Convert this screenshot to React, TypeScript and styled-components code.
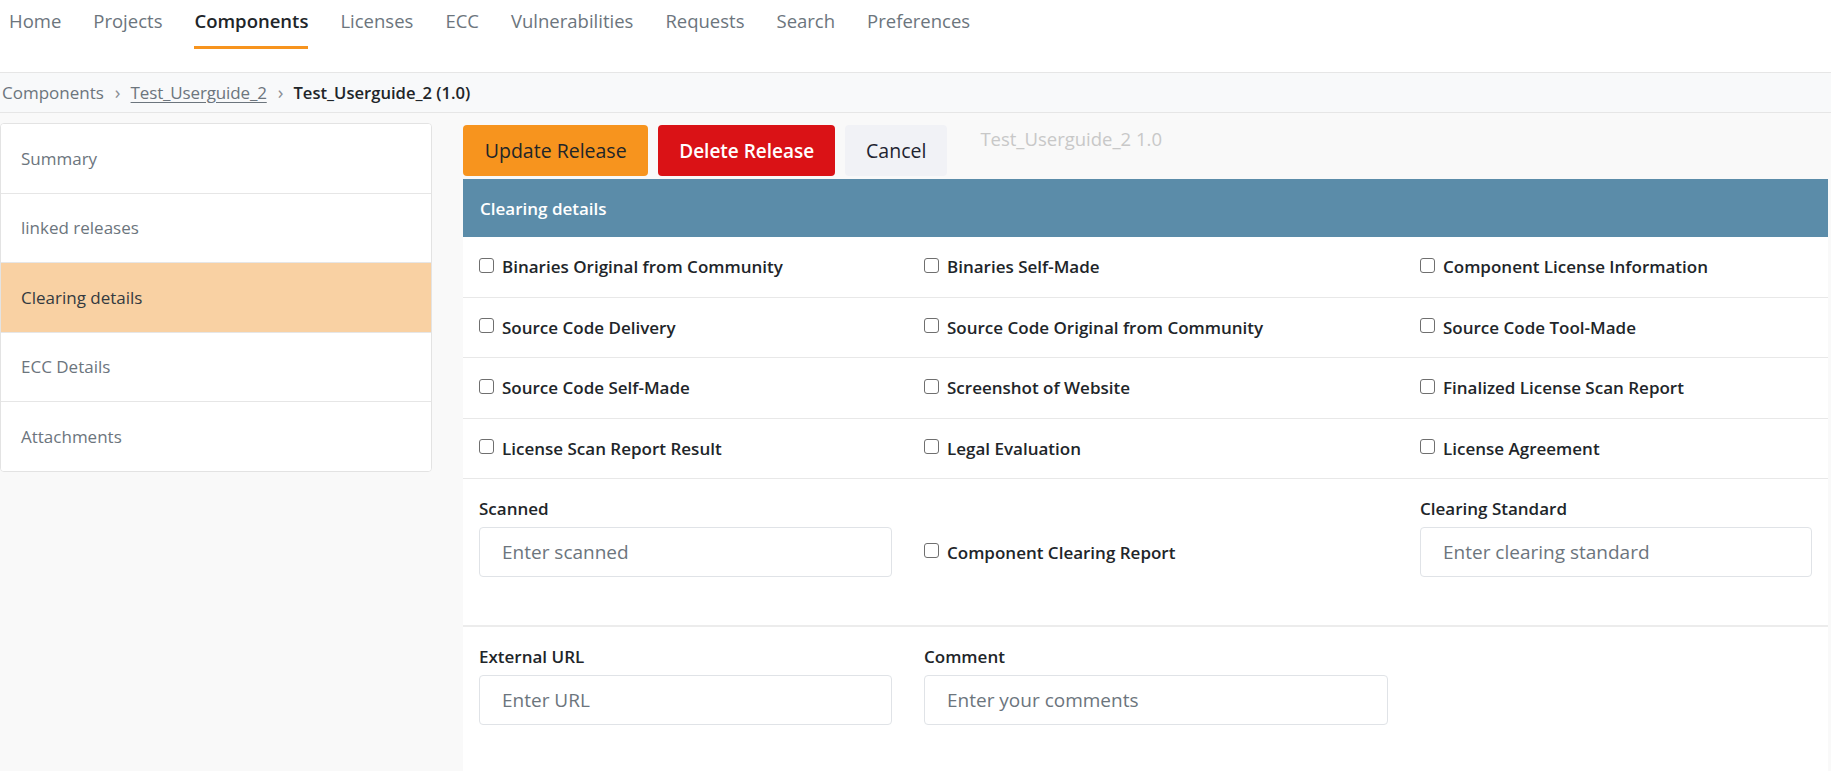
import styled, { createGlobalStyle } from "styled-components";

const GlobalStyle = createGlobalStyle`
  html, body {
    margin: 0;
    padding: 0;
  }
  body {
    background: #f9f9f9;
    font-family: "Open Sans", "Noto Sans", sans-serif;
    color: #212529;
  }
  * {
    box-sizing: border-box;
  }
`;

const navItems = [
  "Home",
  "Projects",
  "Components",
  "Licenses",
  "ECC",
  "Vulnerabilities",
  "Requests",
  "Search",
  "Preferences",
];

const sideItems = [
  "Summary",
  "linked releases",
  "Clearing details",
  "ECC Details",
  "Attachments",
];

const checkRows = [
  ["Binaries Original from Community", "Binaries Self-Made", "Component License Information"],
  ["Source Code Delivery", "Source Code Original from Community", "Source Code Tool-Made"],
  ["Source Code Self-Made", "Screenshot of Website", "Finalized License Scan Report"],
  ["License Scan Report Result", "Legal Evaluation", "License Agreement"],
];

function Check({ label }: { label: string }) {
  return (
    <CheckLabel>
      <Box type="checkbox" />
      {label}
    </CheckLabel>
  );
}

export default function App() {
  return (
    <Page>
      <GlobalStyle />
      <TopNav>
        {navItems.map((item) => (
          <NavLink key={item} $active={item === "Components"}>
            {item}
          </NavLink>
        ))}
      </TopNav>

      <Breadcrumbs>
        <Crumb>Components</Crumb>
        <CrumbSep>›</CrumbSep>
        <Crumb $link>Test_Userguide_2</Crumb>
        <CrumbSep>›</CrumbSep>
        <Crumb $current>Test_Userguide_2 (1.0)</Crumb>
      </Breadcrumbs>

      <Body>
        <SideCard>
          {sideItems.map((item) => (
            <SideItem key={item} $active={item === "Clearing details"}>
              {item}
            </SideItem>
          ))}
        </SideCard>

        <Content>
          <Toolbar>
            <Button $variant="update">Update Release</Button>
            <Button $variant="delete">Delete Release</Button>
            <Button $variant="cancel">Cancel</Button>
            <ReleaseTitle>Test_Userguide_2 1.0</ReleaseTitle>
          </Toolbar>

          <Panel>
            <PanelHeader>Clearing details</PanelHeader>
            <Grid>
              {checkRows.map((row) =>
                row.map((label) => (
                  <CheckCell key={label}>
                    <Check label={label} />
                  </CheckCell>
                ))
              )}

              <FieldCell $divider>
                <FieldLabel>Scanned</FieldLabel>
                <TextInput placeholder="Enter scanned" />
              </FieldCell>
              <FieldCell $divider>
                <InlineCheck>
                  <Check label="Component Clearing Report" />
                </InlineCheck>
              </FieldCell>
              <FieldCell $divider>
                <FieldLabel>Clearing Standard</FieldLabel>
                <TextInput placeholder="Enter clearing standard" />
              </FieldCell>

              <FieldCell>
                <FieldLabel>External URL</FieldLabel>
                <TextInput placeholder="Enter URL" />
              </FieldCell>
              <FieldCell>
                <FieldLabel>Comment</FieldLabel>
                <TextInput placeholder="Enter your comments" />
              </FieldCell>
              <FieldCell />
            </Grid>
          </Panel>
        </Content>
      </Body>
    </Page>
  );
}

const Page = styled.div`
  display: flex;
  flex-direction: column;
  min-height: 100vh;
`;

const TopNav = styled.nav`
  display: flex;
  gap: 32px;
  height: 72px;
  padding-left: 9px;
  background: #fff;
`;

const NavLink = styled.a<{ $active?: boolean }>`
  padding: 8px 0 13px;
  height: 49px;
  line-height: 25px;
  font-size: 18.5px;
  font-weight: ${(p) => (p.$active ? 600 : 400)};
  color: ${(p) => (p.$active ? "#212529" : "#6c757d")};
  border-bottom: 3px solid ${(p) => (p.$active ? "#f7941e" : "transparent")};
  cursor: pointer;
`;

const Breadcrumbs = styled.div`
  display: flex;
  align-items: center;
  height: 41px;
  padding: 0 0 1px 2px;
  background: #f8f9fa;
  border-top: 1px solid #e6e6e6;
  border-bottom: 1px solid #e6e6e6;
  font-size: 17px;
`;

const Crumb = styled.span<{ $link?: boolean; $current?: boolean }>`
  color: ${(p) => (p.$current ? "#212529" : "#6c757d")};
  font-size: ${(p) => (p.$current ? "16.6px" : "17px")};
  font-weight: ${(p) => (p.$current ? 600 : 400)};
  letter-spacing: ${(p) => (p.$link ? "-0.15px" : "0")};
  text-decoration: ${(p) => (p.$link ? "underline" : "none")};
  text-underline-offset: 3px;
`;

const CrumbSep = styled.span`
  margin: 0 10px 0 11px;
  font-size: 19px;
  line-height: 1;
  color: #8a8f94;
`;

const Body = styled.div`
  display: flex;
  flex: 1;
  gap: 31px;
  padding-top: 10px;
`;

const SideCard = styled.div`
  align-self: flex-start;
  width: 432px;
  background: #fff;
  border: 1px solid #e3e3e3;
  border-radius: 4px;
  overflow: hidden;
`;

const SideItem = styled.div<{ $active?: boolean }>`
  display: flex;
  align-items: center;
  height: 68.5px;
  padding-left: 20px;
  font-size: 17px;
  color: ${(p) => (p.$active ? "#343a40" : "#6c757d")};
  background: ${(p) => (p.$active ? "#f9d1a3" : "#fff")};

  & + & {
    height: 69.5px;
    border-top: 1px solid #e6e6e6;
  }
`;

const Content = styled.div`
  display: flex;
  flex-direction: column;
  flex: 1;
  margin-right: 3px;
  padding-top: 2px;
`;

const Toolbar = styled.div`
  display: flex;
  align-items: flex-start;
  gap: 10px;
  height: 51px;
  margin-bottom: 3px;
`;

const buttonColors = {
  update: { bg: "#f7941e", fg: "#212529", weight: 400, size: "19.5px", pad: "21.8px" },
  delete: { bg: "#da1216", fg: "#fff", weight: 600, size: "19px", pad: "20.8px" },
  cancel: { bg: "#f1f2f6", fg: "#1e2430", weight: 400, size: "19.5px", pad: "21px" },
};

const Button = styled.button<{ $variant: keyof typeof buttonColors }>`
  height: 51px;
  padding: 0 ${(p) => buttonColors[p.$variant].pad};
  border: none;
  border-radius: 4px;
  font-family: inherit;
  font-size: ${(p) => buttonColors[p.$variant].size};
  font-weight: ${(p) => buttonColors[p.$variant].weight};
  color: ${(p) => buttonColors[p.$variant].fg};
  background: ${(p) => buttonColors[p.$variant].bg};
  cursor: pointer;
`;

const ReleaseTitle = styled.span`
  margin: 1px 0 0 23px;
  line-height: 25px;
  font-size: 18.5px;
  color: #c8c8c8;
`;

const Panel = styled.section`
  flex: 1;
  background: #fff;
`;

const PanelHeader = styled.div`
  display: flex;
  align-items: center;
  height: 58px;
  padding-left: 17px;
  background: #5b8ca9;
  color: #fff;
  font-size: 17px;
  font-weight: 600;
`;

const Grid = styled.div`
  display: grid;
  grid-template-columns: 445fr 496fr 424fr;
`;

const CheckCell = styled.div`
  display: flex;
  align-items: center;
  height: 60.5px;
  padding: 0 16px;
  border-bottom: 1px solid #e8e8e8;
`;

const CheckLabel = styled.label`
  display: flex;
  align-items: center;
  gap: 8px;
  font-size: 17px;
  font-weight: 600;
  color: #212529;
`;

const Box = styled.input`
  appearance: none;
  flex: none;
  width: 15px;
  height: 15px;
  margin: -3px 0 0;
  border: 1px solid #6f6f6f;
  border-radius: 3px;
  background: #fff;
`;

const FieldCell = styled.div<{ $divider?: boolean }>`
  padding: 17.5px 16px ${(p) => (p.$divider ? "48px" : "30px")};
  border-bottom: ${(p) => (p.$divider ? "2px solid #ececec" : "none")};
`;

const FieldLabel = styled.label`
  display: block;
  margin-bottom: 6.5px;
  line-height: 24px;
  font-size: 17px;
  font-weight: 600;
  color: #212529;
`;

const InlineCheck = styled.div`
  display: flex;
  align-items: center;
  height: 50px;
  margin-top: 30.5px;
`;

const TextInput = styled.input`
  display: block;
  width: 100%;
  height: 50px;
  padding: 0 22px;
  border: 1px solid #e0e3e7;
  border-radius: 4px;
  font-family: inherit;
  font-size: 19px;
  color: #212529;
  background: #fff;

  &::placeholder {
    color: #6c757d;
  }
`;
